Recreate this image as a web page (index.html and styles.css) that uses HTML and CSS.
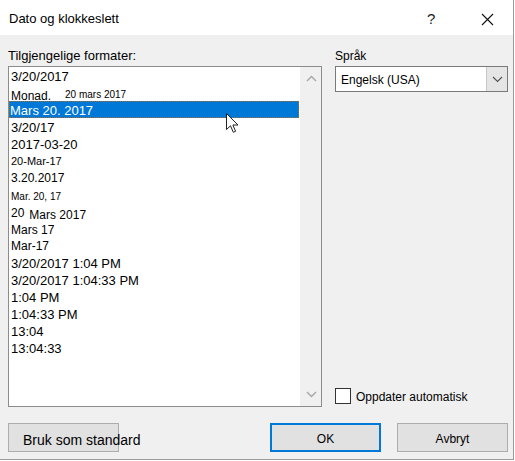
FILE: index.html
```html
<!DOCTYPE html>
<html lang="nb">
<head>
  <meta charset="UTF-8">
  <title>Dato og klokkeslett</title>
  <link rel="stylesheet" href="styles.css">
</head>
<body>

  <div class="window">

    <div class="titlebar">
      <div class="title">Dato og klokkeslett</div>
      <div class="help">?</div>
      <div class="close">
        <svg width="13" height="13" viewBox="0 0 13 13">
          <path d="M1 1 L12 12 M12 1 L1 12" stroke="#111" stroke-width="1.1" fill="none"/>
        </svg>
      </div>
    </div>

    <div class="dialog">
      <div class="main">

        <div class="col-left">
          <div class="label">Tilgjengelige formater:</div>
          <div class="listbox">
            <div class="items">
              <div class="row">3/20/2017</div>
              <div class="row"><span class="s12 low">Monad.</span><span class="s10 gap-mon">20 mars 2017</span></div>
              <div class="row selected"><span class="sel-text">Mars 20. 2017</span></div>
              <div class="row">3/20/17</div>
              <div class="row">2017-03-20</div>
              <div class="row s11">20-Mar-17</div>
              <div class="row s12">3.20.2017</div>
              <div class="row s10 low">Mar. 20, 17</div>
              <div class="row"><span class="s12">20</span><span class="s12 low gap-20">Mars 2017</span></div>
              <div class="row s12 low">Mars 17</div>
              <div class="row s12">Mar-17</div>
              <div class="row">3/20/2017 1:04 PM</div>
              <div class="row">3/20/2017 1:04:33 PM</div>
              <div class="row">1:04 PM</div>
              <div class="row">1:04:33 PM</div>
              <div class="row">13:04</div>
              <div class="row">13:04:33</div>
            </div>
            <div class="scrollbar">
              <svg width="11" height="7" viewBox="0 0 11 7"><path d="M1 6 L5.5 1.5 L10 6" stroke="#a6a6a6" stroke-width="1.4" fill="none"/></svg>
              <svg width="11" height="7" viewBox="0 0 11 7"><path d="M1 1 L5.5 5.5 L10 1" stroke="#a6a6a6" stroke-width="1.4" fill="none"/></svg>
            </div>

            <svg class="cursor" width="14" height="21" viewBox="0 0 14 21">
              <path d="M0.5 0.5 L0.5 16.5 L4.5 12.8 L7.3 19.3 L9.6 18.3 L6.9 12 L12 12 Z" fill="#fff" stroke="#222" stroke-width="1"/>
            </svg>
          </div>
        </div>

        <div class="col-right">
          <div class="label">Språk</div>
          <div class="combo">
            <div class="combo-text">Engelsk (USA)</div>
            <div class="combo-btn">
              <svg width="11" height="7" viewBox="0 0 11 7"><path d="M1 1 L5.5 5.5 L10 1" stroke="#555" stroke-width="1.2" fill="none"/></svg>
            </div>
          </div>
          <div class="check-row">
            <div class="checkbox"></div>
            <span>Oppdater automatisk</span>
          </div>
        </div>

      </div>

      <div class="buttons">
        <div class="btn btn-default">Bruk som standard</div>
        <div class="btn-group">
          <div class="btn btn-ok">OK</div>
          <div class="btn">Avbryt</div>
        </div>
      </div>
    </div>

  </div>

</body>
</html>
```

FILE: styles.css
```css
* {
  margin: 0;
  padding: 0;
  box-sizing: border-box;
}

body {
  background-color: #fff;
  font-family: 'Liberation Sans', Arial, sans-serif;
  font-size: 13px;
  color: #000;
}

.window {
  width: 514px;
  height: 460px;
  border-right: 1px solid #9b9b9b;
  border-bottom: 1px solid #9b9b9b;
  display: flex;
  flex-direction: column;
}

/* title bar */
.titlebar {
  height: 35px;
  background-color: #fff;
  display: flex;
  align-items: center;
  padding: 2px 0 0 9px;
}

.title {
  flex: 1;
  font-size: 13px;
}

.help {
  width: 54px;
  font-size: 15px;
  color: #222;
  margin-top: -1px;
}

.close {
  width: 32px;
  display: flex;
  padding-top: 1px;
}

/* dialog body */
.dialog {
  flex: 1;
  background-color: #f0f0f0;
  padding: 0 5px 0 8px;
  display: flex;
  flex-direction: column;
}

.main {
  display: grid;
  grid-template-columns: 314px 173px;
  column-gap: 13px;
}

.label {
  padding-top: 13px;
  line-height: 15px;
  margin-bottom: 3px;
}

.col-right .label {
  font-size: 12px;
  padding-top: 14px;
  margin-bottom: 2px;
}

/* list */
.listbox {
  position: relative;
  height: 341px;
  border: 1px solid #8c8c8c;
  background-color: #fff;
  display: flex;
}

.items {
  flex: 1;
}

.row {
  height: 17px;
  line-height: 15px;
  padding: 2px 0 0 2px;
  white-space: nowrap;
}

.s12 { font-size: 12px; }
.s11 { font-size: 11px; }
.s10 { font-size: 10px; }
.low { position: relative; top: 2px; }
.row.low { position: static; padding-top: 3px; }

.gap-mon { margin-left: 14px; }
.gap-20 { margin-left: 5px; }

.row.selected {
  margin-right: 1px;
  padding-left: 0;
  background-color: #0078d7;
  border: 1px dotted #a86b2e;
  line-height: 15px;
  padding-top: 1px;
  color: #fff;
}

.scrollbar {
  width: 21px;
  background-color: #f0f0f0;
  display: flex;
  flex-direction: column;
  justify-content: space-between;
  align-items: center;
  padding: 8px 0 8px 1px;
}

.cursor {
  position: absolute;
  left: 217px;
  top: 46px;
}

/* right column */
.col-right {
  display: flex;
  flex-direction: column;
}

.combo {
  height: 26px;
  border: 1px solid #7a7a7a;
  background-color: #fff;
  display: flex;
}

.combo-text {
  flex: 1;
  font-size: 12px;
  padding: 6px 0 0 5px;
}

.combo-btn {
  width: 21px;
  margin: 0;
  background-color: #e5e5e5;
  border-left: 1px solid #c8c8c8;
  display: flex;
  align-items: center;
  justify-content: center;
}

.check-row {
  margin-top: auto;
  margin-bottom: 2px;
  display: flex;
  align-items: center;
  gap: 5px;
}

.checkbox {
  width: 16px;
  height: 16px;
  border: 1px solid #333;
  background-color: #fff;
}

.check-row span {
  font-size: 12px;
  line-height: 16px;
  padding-top: 3px;
}

/* buttons */
.buttons {
  margin-top: 16px;
  display: flex;
  justify-content: space-between;
}

.btn-group {
  display: flex;
  gap: 16px;
}

.btn {
  width: 111px;
  height: 29px;
  font-size: 12px;
  background-color: #e1e1e1;
  border: 1px solid #adadad;
  display: flex;
  align-items: center;
  justify-content: center;
  padding-top: 2px;
  white-space: nowrap;
}

.btn-default {
  font-size: 14px;
  justify-content: flex-start;
  padding: 4px 0 0 14px;
  overflow: visible;
}

.btn-ok {
  border: 2px solid #0078d7;
}
```
